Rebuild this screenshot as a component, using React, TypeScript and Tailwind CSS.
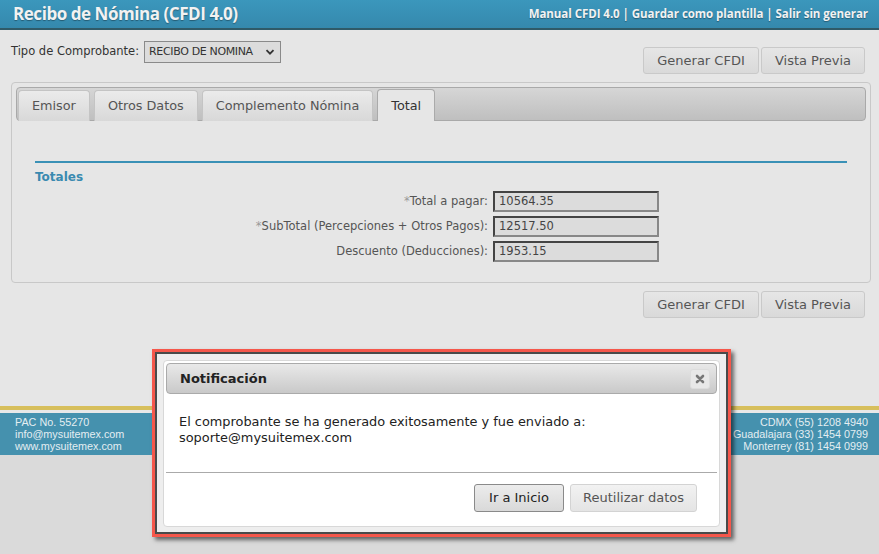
import React from 'react';

const tabs = ['Emisor', 'Otros Datos', 'Complemento Nómina', 'Total'];

const rows = [
  { label: 'Total a pagar:', req: true, value: '10564.35' },
  { label: 'SubTotal (Percepciones + Otros Pagos):', req: true, value: '12517.50' },
  { label: 'Descuento (Deducciones):', req: false, value: '1953.15' },
];

const GrayButton: React.FC<{ children: React.ReactNode; className?: string }> = ({ children, className = '' }) => (
  <button
    className={`h-[27px] rounded-[3px] border border-[#c9c9c9] bg-gradient-to-b from-[#e6e6e6] to-[#d9d9d9] text-[13px] text-[#555] ${className}`}
  >
    {children}
  </button>
);

const App: React.FC = () => {
  return (
    <div className="relative flex h-[554px] w-full flex-col overflow-hidden bg-[#e6e6e6] font-['DejaVu_Sans',sans-serif]">
      {/* header */}
      <div className="flex h-[30px] items-center justify-between border-b-2 border-[#2f5a68] bg-gradient-to-b from-[#3b97bc] to-[#3589ad] pl-[13px] pr-[11px]">
        <h1 className="font-['Open_Sans',sans-serif] text-[17px] font-bold tracking-[-0.45px] text-[#f2f2f2] [text-shadow:0_1px_1px_rgba(0,0,0,0.35)]">
          Recibo de Nómina (CFDI 4.0)
        </h1>
        <div className="font-['Open_Sans',sans-serif] text-[11.5px] font-bold tracking-[-0.05px] text-[#f2f2f2] [text-shadow:0_1px_1px_rgba(0,0,0,0.35)]">
          Manual CFDI 4.0 | Guardar como plantilla | Salir sin generar
        </div>
      </div>

      <div className="pl-[11px] pr-[8px]">
        {/* tipo + buttons */}
        <div className="flex h-[52px] items-start justify-between">
          <div className="mt-[11px] flex items-center gap-[5px] text-[11.5px] text-[#333]">
            <span>Tipo de Comprobante:</span>
            <div className="flex h-[22px] w-[137px] items-center justify-between whitespace-nowrap border border-[#8a8a8a] bg-[#dcdcdc] pl-[4px] pr-[5px] text-[11px] tracking-[-0.35px] text-[#333]">
              <span>RECIBO DE NOMINA</span>
              <svg width="10" height="10" viewBox="0 0 10 10">
                <path d="M1.5 3.2 L5 6.7 L8.5 3.2" fill="none" stroke="#333" strokeWidth="1.8" />
              </svg>
            </div>
          </div>
          <div className="mr-[6px] mt-[17px] flex gap-[2px]">
            <GrayButton className="w-[116px]">Generar CFDI</GrayButton>
            <GrayButton className="w-[104px]">Vista Previa</GrayButton>
          </div>
        </div>

        {/* tabs container */}
        <div className="h-[201px] rounded-[4px] border border-[#c8c8c8] p-[4px]">
          <div className="flex h-[34px] items-end gap-[4px] rounded-[4px] border border-[#a9a9a9] bg-gradient-to-b from-[#d6d6d6] to-[#bfbfbf] pl-[1px]">
            {tabs.map((t) => {
              const active = t === 'Total';
              return (
                <div
                  key={t}
                  className={`-mb-px flex h-[31px] items-center rounded-t-[4px] border border-b-0 px-[13px] text-[12.8px] ${
                    active
                      ? 'h-[32px] border-[#aaa] bg-[#e6e6e6] text-[#333]'
                      : 'border-[#c4c4c4] bg-gradient-to-b from-[#ebebeb] to-[#d8d8d8] text-[#555]'
                  }`}
                >
                  {t}
                </div>
              );
            })}
          </div>

          <div className="px-[19px] pt-[40px]">
            <div className="h-[2px] bg-[#3a91b6]" />
            <div className="mt-[5px] text-[12px] font-bold text-[#3a8ab0]">Totales</div>
            <div className="mt-[5px] grid grid-cols-[453px_166px] gap-x-[5px] gap-y-[4px]">
              {rows.map((r) => (
                <React.Fragment key={r.label}>
                  <div className="flex h-[21px] items-center justify-end text-[11.5px] text-[#555]">
                    {r.req && <span className="text-[#999]">*</span>}
                    {r.label}
                  </div>
                  <div className="flex h-[21px] items-center border-2 border-t-[#444] border-l-[#444] border-r-[#888] border-b-[#888] bg-[#dcdcdc] pl-[4px] text-[11.5px] text-[#444]">
                    {r.value}
                  </div>
                </React.Fragment>
              ))}
            </div>
          </div>
        </div>

        <div className="mr-[6px] mt-[8px] flex justify-end gap-[2px]">
          <GrayButton className="w-[116px]">Generar CFDI</GrayButton>
          <GrayButton className="w-[104px]">Vista Previa</GrayButton>
        </div>
      </div>

      {/* footer */}
      <div className="mt-[88px]">
        <div className="h-[4px] bg-[#d7bf5c]" />
        <div className="h-[3px] bg-[#e8e8e8]" />
        <div className="flex h-[42px] justify-between bg-[#4591ae] pl-[15px] pr-[11px] pt-[3px] font-['Liberation_Sans',sans-serif] text-[10.8px] leading-[12px] text-[#e4eef2]">
          <div>
            <div>PAC No. 55270</div>
            <div>info@mysuitemex.com</div>
            <div>www.mysuitemex.com</div>
          </div>
          <div className="text-right">
            <div>CDMX (55) 1208 4940</div>
            <div>Guadalajara (33) 1454 0799</div>
            <div>Monterrey (81) 1454 0999</div>
          </div>
        </div>
      </div>
      <div className="flex-1 bg-[#dadada]" />

      {/* notification dialog, highlighted */}
      <div className="absolute left-[152px] top-[349px] h-[188px] w-[579px] border-[3px] border-[#f5574b] shadow-[3px_3px_4px_rgba(0,0,0,0.55)]">
        <div className="h-full w-full border-2 border-[#4a4a4a] bg-[#eeeeee] px-[6px] pb-[5px] pt-[6px]">
          <div className="flex h-full flex-col rounded-[4px] border border-[#d8d8d8] bg-white p-[2px]">
            <div className="flex h-[31px] items-center justify-between rounded-[4px] border border-[#aaa] bg-gradient-to-b from-[#e9e9e9] to-[#c9c9c9] pl-[13px] pr-[6px]">
              <span className="text-[13px] font-bold text-[#222]">Notificación</span>
              <div className="flex h-[20px] w-[20px] items-center justify-center rounded-[3px] border border-[#ddd] bg-[#e8e8e8]">
                <svg width="10" height="10" viewBox="0 0 10 10">
                  <path d="M2 2 L8 8 M8 2 L2 8" stroke="#777" strokeWidth="2.6" strokeLinecap="round" />
                </svg>
              </div>
            </div>
            <div className="px-[13px] pt-[20px] text-[12.9px] leading-[16px] text-[#222]">
              El comprobante se ha generado exitosamente y fue enviado a:
              <br />
              soporte@mysuitemex.com
            </div>
            <div className="mt-[26px] h-px bg-[#aaa]" />
            <div className="flex justify-end gap-[6px] pr-[20px] pt-[11px]">
              <button className="h-[28px] w-[90px] rounded-[3px] border border-[#8a8a8a] bg-gradient-to-b from-[#ececec] to-[#d9d9d9] text-[13px] text-[#222]">
                Ir a Inicio
              </button>
              <button className="h-[28px] w-[127px] rounded-[3px] border border-[#d3d3d3] bg-gradient-to-b from-[#f2f2f2] to-[#e4e4e4] text-[13px] text-[#555]">
                Reutilizar datos
              </button>
            </div>
          </div>
        </div>
      </div>
    </div>
  );
};

export default App;
